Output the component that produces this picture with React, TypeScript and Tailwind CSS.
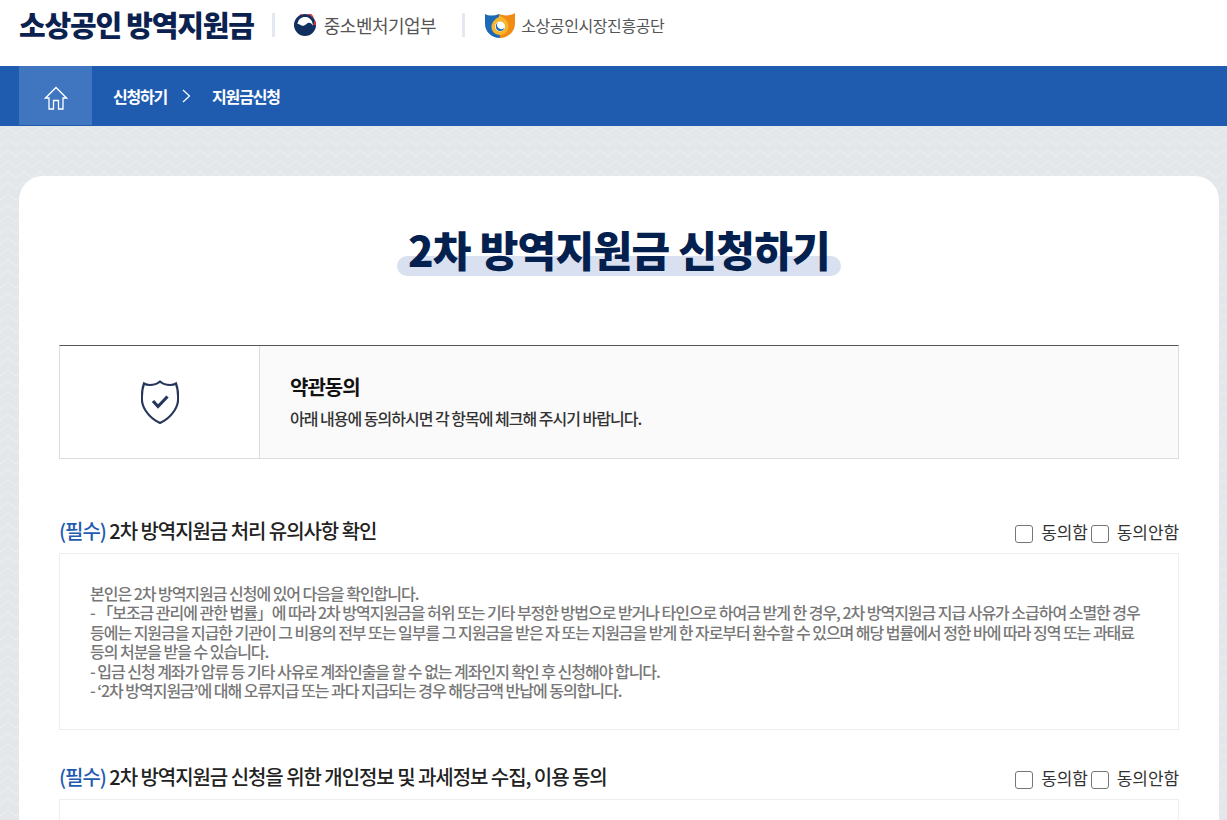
import React from 'react';

const FONT = "font-['Noto_Sans_CJK_KR','Noto_Sans',sans-serif]";

const Taegeuk: React.FC = () => (
  <svg width="22" height="22" viewBox="0 0 22 22">
    <circle cx="11" cy="11" r="11" fill="#11305f" />
    <path d="M5 2 A11 11 0 0 1 22 11 L19 11 A8 8 0 0 0 5 2 Z" fill="#d8323c" />
    <path d="M3.500 10 C4 5 8 2.500 12 3 C16.500 3.500 19 7.500 18.800 12 C17.500 8.500 14.500 8 12.500 10 C10.500 12 8 12.300 6.500 11 C5.500 10.200 4.500 9.800 3.500 10 Z" fill="#fff" />
  </svg>
);

const SbcLogo: React.FC = () => (
  <svg width="30" height="25" viewBox="0 0 30 25">
    <path d="M0 1 C4 3 9 3 14 1 L15 25 C7 25 0 19 0 11 Z" fill="#1c69b8" />
    <path d="M14 1 C19 3 25 3 30 0 L30 10 C30 19 23 25 15 25 Z" fill="#f08c14" />
    <path d="M15 3 C20 5 24 9 23.500 14 C23 19 19 22 15 22 C10 22 6 18 6.500 13 C7 9 10 6 15 3 Z" fill="#f7b52b" />
    <circle cx="15" cy="13.500" r="5" fill="#fff" />
    <path d="M13 9.500 A4.600 4.600 0 0 0 15 18 A4.600 4.600 0 0 0 19.500 14.500 A3.500 3.500 0 0 1 13 9.500 Z" fill="#1c69b8" />
  </svg>
);

const Divider: React.FC = () => (
  <div className="w-[3px] h-[24px] bg-[#e4e8f0]" />
);

const Agreement: React.FC<{ title: string; children?: React.ReactNode }> = ({ title, children }) => (
  <section className="mb-[27px]">
    <div className="flex items-center justify-between h-[42px] pb-[2px]">
      <h3 className="text-[20px] font-medium tracking-[-1.05px] text-[#222]">
        <span className="text-[#1f5cb0]">(필수)</span> {title}
      </h3>
      <div className="flex items-center text-[17px] tracking-[-0.1px] text-[#333] pt-[2px]">
        <span className="w-[18px] h-[18px] mt-[3px] rounded-[3px] border border-[#767676] bg-white mr-[8px]" />
        <span>동의함</span>
        <span className="w-[18px] h-[18px] mt-[3px] rounded-[3px] border border-[#767676] bg-white ml-[3px] mr-[8px]" />
        <span>동의안함</span>
      </div>
    </div>
    <div className="border border-[#eeeeee] bg-white px-[30px] pt-[30px] h-[177px] text-[16px] leading-[19.400px] tracking-[-1.03px] font-medium text-[#777]">
      {children}
    </div>
  </section>
);

const App: React.FC = () => {
  return (
    <div className={`${FONT} h-screen overflow-hidden bg-white`}>
      <header className="h-[66px] pl-[19px] flex items-start">
        <div className="flex items-center h-[50px]">
          <h1 className="text-[29px] font-black tracking-[-1.2px] text-[#0b2250] pb-[1px]">소상공인 방역지원금</h1>
          <div className="ml-[18px]"><Divider /></div>
          <div className="ml-[19px]"><Taegeuk /></div>
          <span className="ml-[8px] text-[18px] tracking-[-0.5px] text-[#555]">중소벤처기업부</span>
          <div className="ml-[26px]"><Divider /></div>
          <div className="ml-[20px]"><SbcLogo /></div>
          <span className="ml-[6px] text-[16px] tracking-[-0.4px] text-[#555]">소상공인시장진흥공단</span>
        </div>
      </header>

      <nav className="h-[60px] bg-[#1f5cb0] pl-[19px] flex items-start">
        <div className="w-[73px] h-[59px] bg-[#4076bf] flex items-center justify-center pt-[5px]">
          <svg width="24" height="24" viewBox="0 0 24 24" fill="none" stroke="#fff" strokeWidth="1.300">
            <path d="M1.500 12 L12 1.500 L22.500 12 H19 V23 H14.500 V14.500 H9.500 V23 H5 V12 Z" strokeLinejoin="miter" />
          </svg>
        </div>
        <div className="flex items-center h-[59px] pt-[1px] text-white text-[16px] font-bold tracking-[-1.2px]">
          <span className="ml-[21px]">신청하기</span>
          <svg className="ml-[15px]" width="9" height="14" viewBox="0 0 9 14" fill="none" stroke="#fff" strokeWidth="1.200">
            <path d="M1 1 L7.500 7 L1 13" />
          </svg>
          <span className="ml-[21px]">지원금신청</span>
        </div>
      </nav>

      <main className="relative bg-[#e3e7ea] pt-[50px] pl-[19px] pr-[8px] h-[694px] overflow-hidden">
        <svg className="absolute inset-0 w-full h-full" aria-hidden="true">
          <defs>
            <pattern id="zigzag" width="16" height="11" patternUnits="userSpaceOnUse">
              <path d="M0 8 L8 2 L16 8" fill="none" stroke="#f0f2f4" strokeWidth="1" strokeDasharray="1.500 0.800" />
            </pattern>
          </defs>
          <rect width="100%" height="100%" fill="url(#zigzag)" />
        </svg>

        <div className="relative bg-white rounded-t-[24px] px-[40px] pt-[43px] h-[700px]">
          <div className="flex justify-center">
            <h2 className="relative text-[42px] leading-[60px] font-black tracking-[-0.7px] text-[#03204f] px-[11px]">
              <span className="absolute left-0 right-0 bottom-[3px] h-[20px] rounded-[10px] bg-[#d9e0ef]" />
              <span className="relative">2차 방역지원금 신청하기</span>
            </h2>
          </div>

          <div className="mt-[66px] h-[114px] flex border border-[#dddddd] border-t-[#555555]">
            <div className="w-[200px] flex items-center justify-center border-r border-[#dddddd] bg-white">
              <svg width="38" height="44" viewBox="0 0 38 44" fill="none" stroke="#27365c" strokeWidth="2.200">
                <path d="M19 1.500 C22 4 24.500 5 29 5 C31 5 33.500 4.500 35 3.500 C37 9 37.500 14 37 21 C36 30 28 39 19 43 C10 39 2 30 1 21 C0.500 14 1 9 3 3.500 C4.500 4.500 7 5 9 5 C13.500 5 16 4 19 1.500 Z" />
                <path d="M12 21 L17 26.500 L26.500 16.500" strokeWidth="3.200" />
              </svg>
            </div>
            <div className="flex-1 bg-[#fafafa] pl-[30px] pt-[27px]">
              <h3 className="text-[20px] leading-[28px] font-bold tracking-[-1px] text-[#111]">약관동의</h3>
              <p className="mt-[6px] text-[16px] leading-[22px] font-medium tracking-[-1px] text-[#333]">
                아래 내용에 동의하시면 각 항목에 체크해 주시기 바랍니다.
              </p>
            </div>
          </div>

          <div className="mt-[52px]">
            <Agreement title="2차 방역지원금 처리 유의사항 확인">
              <p>본인은 2차 방역지원금 신청에 있어 다음을 확인합니다.</p>
              <p>- 「보조금 관리에 관한 법률」에 따라 2차 방역지원금을 허위 또는 기타 부정한 방법으로 받거나 타인으로 하여금 받게 한 경우, 2차 방역지원금 지급 사유가 소급하여 소멸한 경우</p>
              <p>등에는 지원금을 지급한 기관이 그 비용의 전부 또는 일부를 그 지원금을 받은 자 또는 지원금을 받게 한 자로부터 환수할 수 있으며 해당 법률에서 정한 바에 따라 징역 또는 과태료</p>
              <p>등의 처분을 받을 수 있습니다.</p>
              <p>- 입금 신청 계좌가 압류 등 기타 사유로 계좌인출을 할 수 없는 계좌인지 확인 후 신청해야 합니다.</p>
              <p>- ‘2차 방역지원금’에 대해 오류지급 또는 과다 지급되는 경우 해당금액 반납에 동의합니다.</p>
            </Agreement>
            <Agreement title="2차 방역지원금 신청을 위한 개인정보 및 과세정보 수집, 이용 동의" />
          </div>
        </div>
      </main>
    </div>
  );
};

export default App;
